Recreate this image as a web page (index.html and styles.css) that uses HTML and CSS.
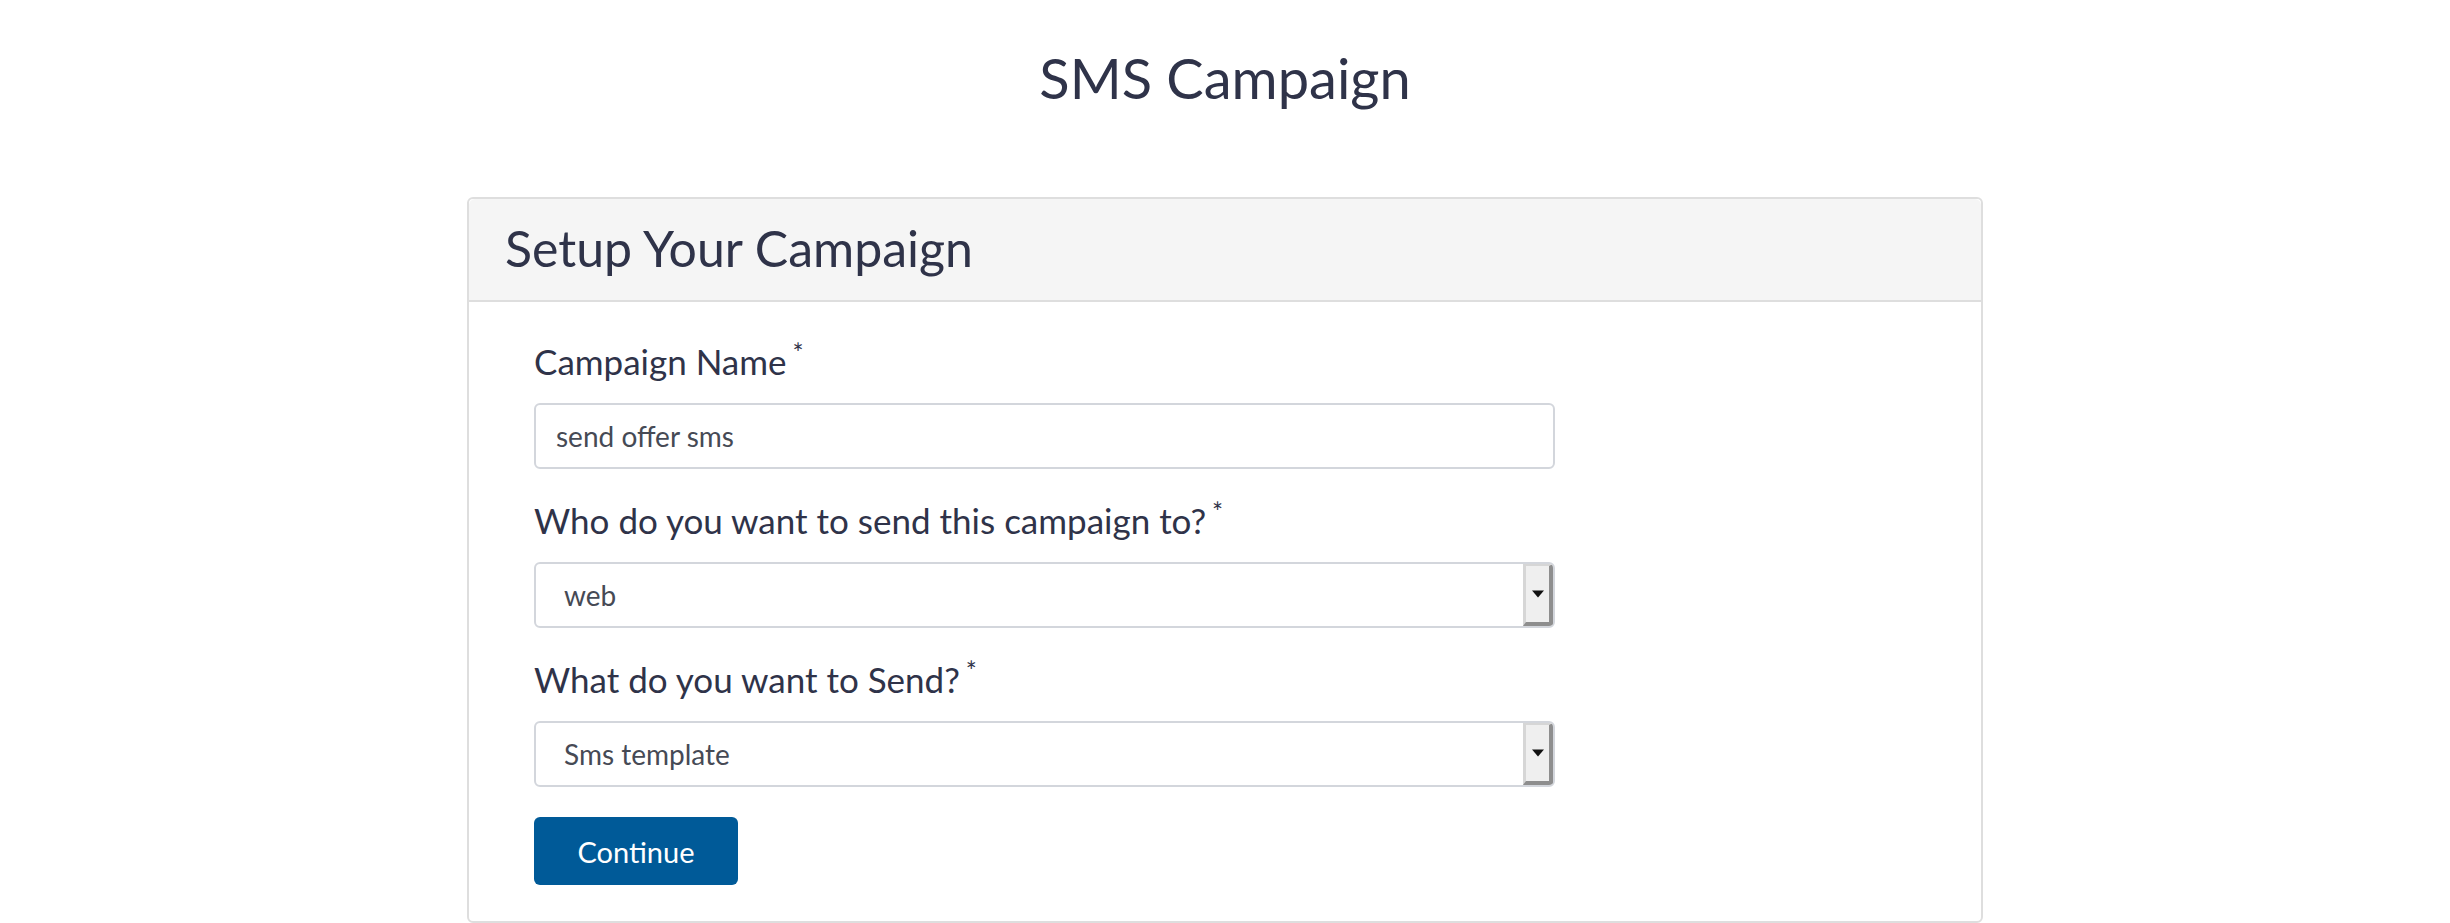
FILE: index.html
```html
<!DOCTYPE html>
<html lang="en">
<head>
<meta charset="utf-8">
<title>SMS Campaign</title>
<link rel="stylesheet" href="styles.css">
</head>
<body>
<main class="page">
  <h1 class="page-title">SMS Campaign</h1>
  <section class="panel">
    <header class="panel-heading">
      <h2 class="panel-title">Setup Your Campaign</h2>
    </header>
    <form class="panel-body">
      <div class="field">
        <label class="field-label" for="name">Campaign Name<sup class="req">*</sup></label>
        <input class="control" id="name" type="text" value="send offer sms">
      </div>
      <div class="field">
        <label class="field-label" for="audience">Who do you want to send this campaign to?<sup class="req">*</sup></label>
        <div class="select-wrap">
          <select class="control select" id="audience"><option>web</option></select>
          <span class="select-arrow"></span>
        </div>
      </div>
      <div class="field">
        <label class="field-label" for="what">What do you want to Send?<sup class="req">*</sup></label>
        <div class="select-wrap">
          <select class="control select" id="what"><option>Sms template</option></select>
          <span class="select-arrow"></span>
        </div>
      </div>
      <button class="btn-primary" type="button">Continue</button>
    </form>
  </section>
</main>
</body>
</html>
```

FILE: styles.css
```css
* { box-sizing: border-box; }
html, body { margin: 0; padding: 0; background: #ffffff; }
body {
  font-family: Lato, "Open Sans", "Liberation Sans", sans-serif;
  color: #2f3349;
}
.page {
  display: flex;
  flex-direction: column;
  align-items: center;
  padding-top: 44px;
}
.page-title {
  margin: 0;
  font-size: 56px;
  font-weight: 400;
  line-height: 68px;
  color: #2f3349;
}
.panel {
  margin-top: 85px;
  width: 1516px;
  border: 2px solid #dedede;
  border-radius: 6px;
  height: 726px;
}
.panel-heading {
  background: #f5f5f5;
  border-bottom: 2px solid #dedede;
  border-radius: 6px 6px 0 0;
  height: 103px;
  display: flex;
  align-items: center;
  padding-left: 36px;
}
.panel-title {
  margin: 0;
  font-size: 50px;
  font-weight: 400;
  color: #2f3349;
  line-height: 1;
  padding-bottom: 4px;
}
.panel-body {
  padding: 38px 0 0 65px;
  display: flex;
  flex-direction: column;
}
.field { display: flex; flex-direction: column; margin-bottom: 30px; }
.field-label {
  font-size: 35px;
  line-height: 42px;
  color: #2f3349;
  margin-bottom: 21px;
}
.req {
  font-size: 26px;
  vertical-align: top;
  position: relative;
  top: -8px;
  margin-left: 6px;
}
.control {
  width: 1021px;
  height: 66px;
  border: 2px solid #d3d6dc;
  border-radius: 6px;
  font-family: Lato, "Open Sans", "Liberation Sans", sans-serif;
  font-size: 28px;
  color: #464a55;
  padding: 0 20px;
  background: #fff;
  outline: none;
}
.select-wrap { position: relative; width: 1021px; }
.select {
  appearance: none;
  -webkit-appearance: none;
  padding-left: 28px;
}
.select-arrow {
  position: absolute;
  right: 2px;
  top: 2px;
  bottom: 2px;
  width: 30px;
  background: #efefef;
  border-left: 3px solid #d6d6d6;
  border-right: 4px solid #8e8e8e;
  border-bottom: 4px solid #8e8e8e;
  border-top: 2px solid #d6d6d6;
  border-radius: 0 4px 4px 0;
}
.select-arrow::after {
  content: "";
  position: absolute;
  left: 50%;
  top: 50%;
  transform: translate(-50%, -50%);
  border-left: 6px solid transparent;
  border-right: 6px solid transparent;
  border-top: 7px solid #111;
}
.btn-primary {
  align-self: flex-start;
  margin-top: 0;
  width: 204px;
  height: 68px;
  border: none;
  border-radius: 6px;
  background: #005a98;
  color: #fff;
  font-family: Lato, "Open Sans", "Liberation Sans", sans-serif;
  font-size: 29px;
  cursor: pointer;
}
```
